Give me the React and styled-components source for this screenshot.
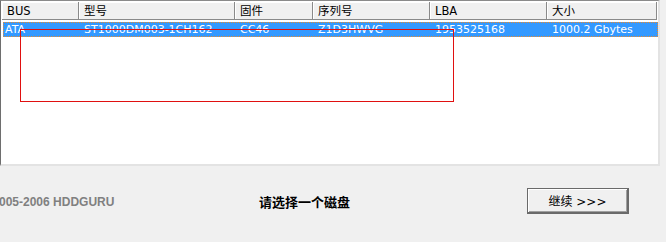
import React from "react";
import styled, { createGlobalStyle } from "styled-components";

const Global = createGlobalStyle`
  html, body { margin: 0; padding: 0; background: #f0f0f0; }
  body { font-family: "DejaVu Sans", "Noto Sans CJK SC", sans-serif; font-size: 11px; }
  * { box-sizing: border-box; }
`;

const Page = styled.div`
  width: 666px;
  height: 242px;
  display: flex;
  flex-direction: column;
  background: #f0f0f0;
`;

const ListView = styled.div`
  position: relative;
  width: 660px;
  height: 166px;
  background: #fff;
  border-top: 1px solid #8a8a8a;
  border-left: 1px solid #6e6e6e;
  border-right: 2px solid #e3e3e3;
  border-bottom: 2px solid #e3e3e3;
  padding: 1px 0 0 1px;
  overflow: hidden;
`;

const cols = [77, 156, 78, 117, 117, 110];

const HeaderRow = styled.div`
  display: flex;
  height: 18px;
`;

const HeaderCell = styled.div`
  width: ${(p) => p.$w}px;
  flex: none;
  height: 18px;
  background: #f0f0f0;
  border-right: 1px solid #8a8a8a;
  border-bottom: 1px solid #8a8a8a;
  box-shadow: inset 1px 1px 0 #ffffff;
  padding: 2px 0 0 5px;
  color: #000;
  font-size: 11.5px;
  line-height: 14px;
  white-space: nowrap;
  font-family: "DejaVu Sans", "Noto Sans CJK SC", sans-serif;
`;

const DataRow = styled.div`
  display: flex;
  margin: 2px 0 0 1px;
  width: 655px;
  height: 15px;
  background: #3399ff;
  border: 1px dotted #e98a2c;
  color: #fff;
`;

const DataCell = styled.div`
  width: ${(p) => p.$w}px;
  flex: none;
  padding-left: ${(p) => p.$pl}px;
  font-size: 11px;
  line-height: 14px;
  white-space: nowrap;
  overflow: hidden;
`;

const Marquee = styled.div`
  position: absolute;
  left: 19px;
  top: 28px;
  width: 434px;
  height: 73px;
  border: 1px solid #e01010;
  pointer-events: none;
`;

const Footer = styled.div`
  display: flex;
  align-items: center;
  height: 26px;
  margin-top: 22px;
`;

const Copyright = styled.div`
  width: 260px;
  flex: none;
  font-family: "Liberation Sans", sans-serif;
  font-weight: bold;
  font-size: 12px;
  color: #808080;
  margin-left: -1px;
  margin-top: 1px;
  white-space: nowrap;
`;

const Prompt = styled.div`
  width: 268px;
  flex: none;
  font-weight: bold;
  font-size: 13px;
  color: #000;
  margin-top: 1px;
  font-family: "Noto Sans CJK SC", sans-serif;
`;

const Button = styled.button`
  width: 102px;
  height: 26px;
  background: #f0f0f0;
  border: 1px solid #6a6a6a;
  border-right-width: 2px;
  border-bottom-width: 2px;
  box-shadow: inset 1px 1px 0 #ffffff, inset -1px -1px 0 #a0a0a0;
  font-family: "DejaVu Sans", "Noto Sans CJK SC", sans-serif;
  font-size: 12px;
  color: #000;
  padding: 0;
  cursor: default;
`;

const headers = ["BUS", "型号", "固件", "序列号", "LBA", "大小"];
const row = ["ATA", "ST1000DM003-1CH162", "CC46", "Z1D3HWVG", "1953525168", "1000.2 Gbytes"];

export default function App() {
  return (
    <>
      <Global />
      <Page>
        <ListView>
          <HeaderRow>
            {headers.map((h, i) => (
              <HeaderCell key={h} $w={cols[i]}>{h}</HeaderCell>
            ))}
          </HeaderRow>
          <DataRow>
            {row.map((t, i) => (
              <DataCell key={i} $w={i === 0 ? cols[i] - 2 : cols[i]} $pl={i === 0 ? 1 : 5}>
                {t}
              </DataCell>
            ))}
          </DataRow>
          <Marquee />
        </ListView>
        <Footer>
          <Copyright>005-2006 HDDGURU</Copyright>
          <Prompt>请选择一个磁盘</Prompt>
          <Button>继续 &gt;&gt;&gt;</Button>
        </Footer>
      </Page>
    </>
  );
}
